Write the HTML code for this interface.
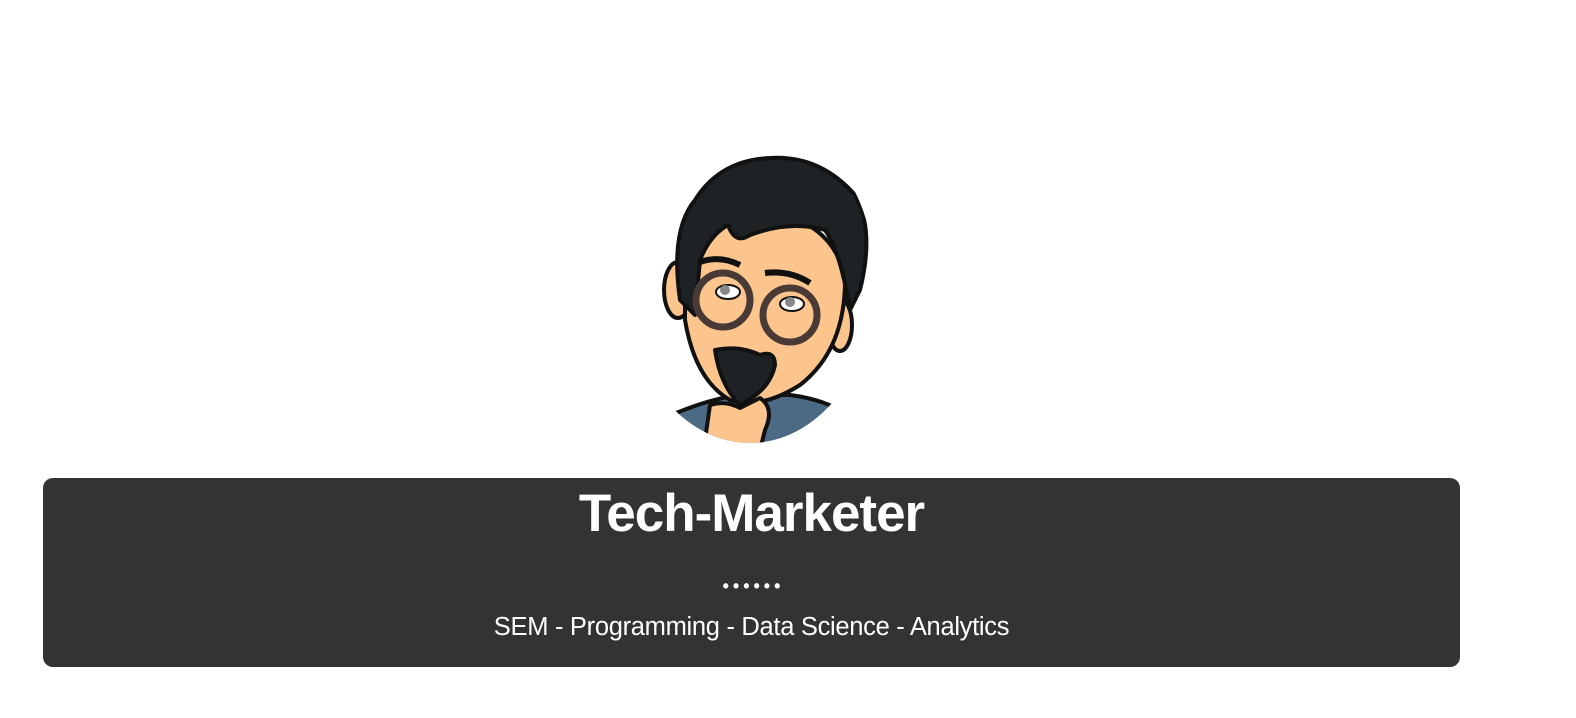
<!DOCTYPE html>
<html><head><style>
html,body{margin:0;padding:0;background:#fff;width:1576px;height:718px;overflow:hidden}
.box{position:absolute;left:43px;top:478px;width:1417px;height:189px;background:#333;border-radius:10px;color:#fff;text-align:center;font-family:"Liberation Sans",sans-serif}
h1{margin:0;position:absolute;left:0;right:0;top:6px;font:bold 53px/60px "Liberation Sans",sans-serif;color:#fff;text-align:center;letter-spacing:-1px}
.dots{position:absolute;left:0;right:0;top:98px;font:bold 18px/20px "Liberation Sans",sans-serif;letter-spacing:4px;padding-left:4px;color:#fff;text-align:center}
.sub{position:absolute;left:0;right:0;top:134px;font:25.5px/30px "Liberation Sans",sans-serif;color:#fff;text-align:center;letter-spacing:-0.3px}
svg{position:absolute;left:640px;top:150px}
</style></head><body>
<svg width="240" height="300" viewBox="0 0 240 300">
<defs><clipPath id="c"><ellipse cx="110" cy="130" rx="125" ry="163"/></clipPath></defs>
<g clip-path="url(#c)" stroke="#111" stroke-width="4" stroke-linejoin="round">
<path d="M10 275 Q60 250 100 245 L150 245 Q190 250 215 270 L215 300 L10 300Z" fill="#4d6a85"/>
<ellipse cx="38" cy="140" rx="14" ry="28" fill="#fdc58e"/>
<ellipse cx="200" cy="175" rx="12" ry="26" fill="#fdc58e"/>
<path d="M45 95 Q60 55 120 60 Q195 70 205 130 Q205 200 160 235 Q120 260 90 250 Q55 230 45 170Z" fill="#fdc58e"/>
<path d="M40 150 Q30 80 55 50 Q80 10 130 8 Q180 5 215 45 Q235 80 220 140 L210 160 Q200 100 185 80 Q150 70 110 85 Q95 95 88 75 Q70 85 60 110 L55 165Z" fill="#1e2224"/>
<path d="M75 200 Q100 195 120 205 Q135 200 135 215 Q130 240 100 255 Q80 235 75 200Z" fill="#1e2224"/>
<circle cx="83" cy="150" r="27" fill="none" stroke="#4a3a36" stroke-width="7"/>
<circle cx="150" cy="165" r="27" fill="none" stroke="#4a3a36" stroke-width="7"/>
<path d="M60 112 Q80 105 100 115 M125 123 Q150 120 170 133" fill="none" stroke-width="6"/>
<ellipse cx="88" cy="142" rx="12" ry="7" fill="#fff" stroke-width="2"/>
<ellipse cx="152" cy="154" rx="12" ry="7" fill="#fff" stroke-width="2"/>
<circle cx="85" cy="140" r="5" fill="#888" stroke="none"/>
<circle cx="150" cy="152" r="5" fill="#888" stroke="none"/>
<path d="M65 290 L70 255 Q85 250 100 258 L120 248 Q135 258 125 280 L120 300Z" fill="#fdc58e"/>
</g>
</svg>
<div class="box">
<h1>Tech-Marketer</h1>
<div class="dots">••••••</div>
<div class="sub">SEM - Programming - Data Science - Analytics</div>
</div>
</body></html>
